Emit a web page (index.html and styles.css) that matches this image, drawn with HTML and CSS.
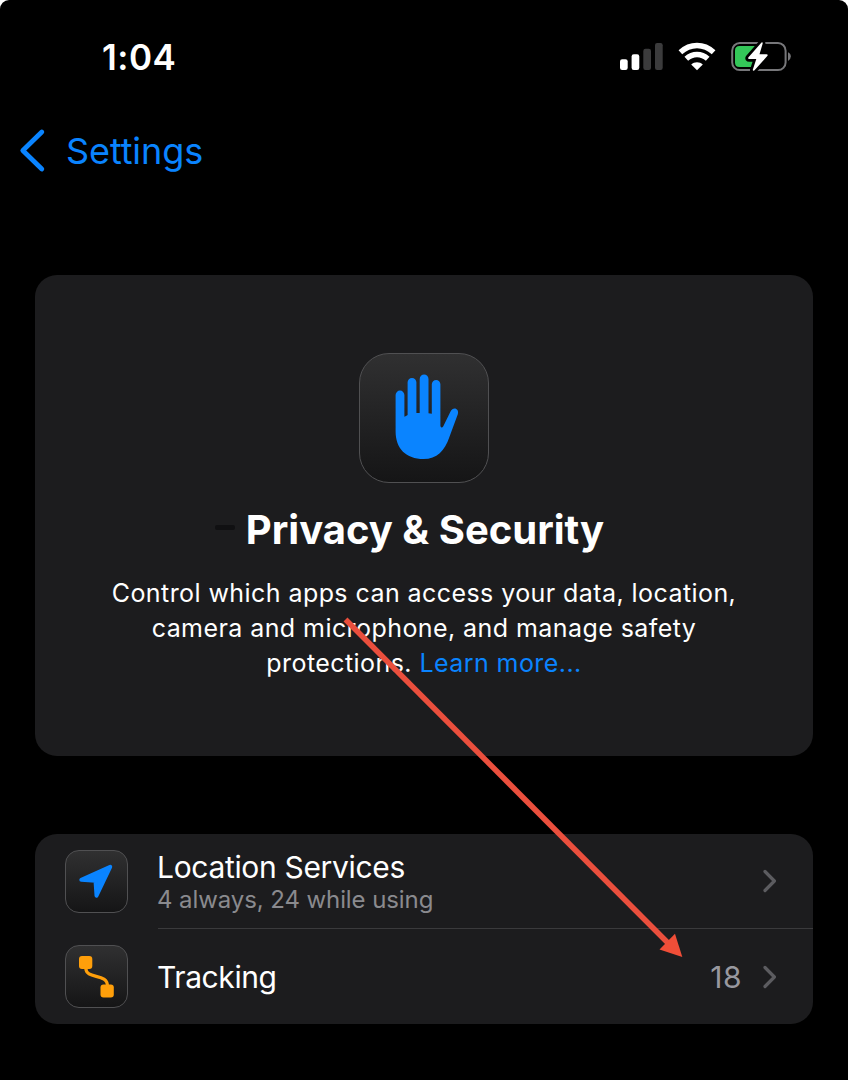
FILE: index.html
```html
<!DOCTYPE html>
<html lang="en">
<head>
<meta charset="utf-8">
<title>Privacy &amp; Security</title>
<link rel="stylesheet" href="styles.css">
</head>
<body>
<main class="screen">
  <header class="status">
    <span class="time">1:04</span>
    <svg class="status-icons" width="174" height="32" viewBox="0 0 174 32">
      <rect x="2" y="19.3" width="7.7" height="10.7" rx="2.2" fill="#fff"/>
      <rect x="13.6" y="14.3" width="7.7" height="15.7" rx="2.2" fill="#fff"/>
      <rect x="25.3" y="8.8" width="7.7" height="21.2" rx="2.2" fill="#3b3b3c"/>
      <rect x="37" y="3" width="7.7" height="27" rx="2.2" fill="#3b3b3c"/>
      <g fill="none" stroke="#fff" stroke-width="5.4">
        <path d="M62.4 12.2C72.2 3.2 85.8 3.2 95.6 12.2"/>
        <path d="M68.3 18.8C74.6 13 83.4 13 89.7 18.8"/>
      </g>
      <path d="M79 30.2L73.2 24.5C76.500 21.500 81.500 21.500 84.800 24.500Z" fill="#fff"/>
      <rect x="114.200" y="3.100" width="53.400" height="27" rx="7.600" fill="none" stroke="#77777a" stroke-width="2"/>
      <path d="M170 12.300Q172.800 13.500 172.800 16.600T170 20.900Z" fill="#77777a"/>
      <path d="M121.500 6H139V27H121.500Q117 27 117 22.500V10.500Q117 6 121.500 6Z" fill="#34c759"/>
      <path d="M143.500 2.500L130.300 17.500Q129.500 19 131.300 19H138.300L134.700 30Q135.300 31.500 136.500 30.200L149.500 15.800Q150.200 14.200 148.500 14.200H141.500L144.700 3.500Q144.700 1.500 143.500 2.500Z" fill="#fff" stroke="#000" stroke-width="5.500" paint-order="stroke" stroke-linejoin="round"/>
    </svg>
  </header>
  <nav class="back">
    <svg width="28" height="46" viewBox="0 0 28 46"><path d="M23.800 4L4.800 22.500L23.800 41" fill="none" stroke="#0a84ff" stroke-width="4.800" stroke-linecap="round" stroke-linejoin="round"/></svg>
    <span class="back-label">Settings</span>
  </nav>
  <section class="card hero">
    <div class="tile tile-large">
      <svg width="130" height="130" viewBox="0 0 130 130" fill="#0a84ff">
        <path d="M36.600 42a4.400 4.400 0 0 1 8.800 0V63.700Q47 63.100 48.600 62.100V29.300a4.400 4.400 0 0 1 8.800 0V59.900H60.700V25.900a4.400 4.400 0 0 1 8.800 0V60.300L72.800 60.700V31.300a4.300 4.300 0 0 1 8.600 0V73Q82.500 76 84.300 73.200L91.400 58.700C94.300 53 100.600 56 98.800 61.300L90.400 84C85.700 98 78 106 64.500 106C47 106 36.600 95.500 36.600 78.500Z"/>
      </svg>
    </div>
    <div class="heading"><i class="dash"></i><h1 class="title">Privacy &amp; Security</h1></div>
    <p class="intro"><span class="line">Control which apps can access your data, location,</span><span class="line">camera and microphone, and manage safety</span><span class="line">protections. <a class="link">Learn more...</a></span></p>
  </section>
  <section class="card list">
    <div class="row">
      <div class="tile tile-small">
        <svg width="63" height="63" viewBox="0 0 63 63"><path d="M45.200 16.800L31.500 45.700L30.500 30.700L16.300 29.800Z" fill="#0a84ff" stroke="#0a84ff" stroke-width="4" stroke-linejoin="round"/></svg>
      </div>
      <div class="row-body divided">
        <div class="labels"><span class="label location">Location Services</span><span class="sub">4 always, 24 while using</span></div>
        <svg class="chevron" width="14" height="24" viewBox="0 0 14 24"><path d="M2 2.500L11.400 12L2 21.500" fill="none" stroke="#5c5c60" stroke-width="3.200" stroke-linecap="round" stroke-linejoin="round"/></svg>
      </div>
    </div>
    <div class="row">
      <div class="tile tile-small">
        <svg width="63" height="63" viewBox="0 0 63 63"><g fill="#ff9f0a"><rect x="14" y="11" width="13.300" height="13" rx="3"/><rect x="35.500" y="39.500" width="13.300" height="13" rx="3"/></g><path d="M20.800 23C20.800 35 42.500 27.500 42.500 41" fill="none" stroke="#ff9f0a" stroke-width="3.200"/></svg>
      </div>
      <div class="row-body">
        <div class="labels"><span class="label tracking">Tracking</span></div>
        <span class="count">18</span>
        <svg class="chevron" width="14" height="24" viewBox="0 0 14 24"><path d="M2 2.500L11.400 12L2 21.500" fill="none" stroke="#5c5c60" stroke-width="3.200" stroke-linecap="round" stroke-linejoin="round"/></svg>
      </div>
    </div>
  </section>
  <svg class="arrow" width="848" height="1080" viewBox="0 0 848 1080"><path d="M345.500 619.500L668 943" stroke="#ea4f3d" stroke-width="5.500"/><path d="M682.300 957L659.500 949.500L675 933.800Z" fill="#f04e38"/></svg>
</main>
</body>
</html>
```
FILE: styles.css
```css
* { box-sizing: border-box; }
body { margin: 0; background: #fff; font-family: Inter, "Liberation Sans", sans-serif; color: #fff; }
svg { display: block; flex: none; }
.screen { position: relative; width: 848px; height: 1080px; background: #000; border-radius: 9px 9px 0 0; padding: 36px 35px 0; overflow: hidden; white-space: nowrap; }
.status { display: flex; justify-content: space-between; height: 92px; padding: 0 21px 0 67px; }
.status-icons { margin-top: 4px; }
.time { font-size: 35px; line-height: 42px; font-weight: 600; letter-spacing: 0.5px; }
.back { display: flex; gap: 20px; height: 147px; margin-left: -17px; color: #0a84ff; }
.back-label { font-size: 36px; line-height: 46px; letter-spacing: -0.1px; }
.card { background: #1c1c1e; border-radius: 22px; }
.hero { height: 481px; padding-top: 78px; display: flex; flex-direction: column; align-items: center; }
.tile { background: linear-gradient(#303031, #151516); border: 1px solid #505052; flex: none; }
.tile svg { margin: -1px; }
.tile-large { width: 130px; height: 130px; border-radius: 30px; }
.tile-small { width: 63px; height: 63px; border-radius: 14px; }
.heading { display: flex; margin-top: 23px; margin-left: -29px; }
.dash { width: 20px; height: 5px; border-radius: 2px; background: #101012; margin: 19px 11px 0 0; }
.title { margin: 0; font-size: 40px; line-height: 48px; font-weight: 700; }
.intro { margin: 22px 0 0; font-size: 25px; line-height: 35px; letter-spacing: 0.43px; text-align: center; }
.line { display: block; }
.link { color: #0a84ff; }
.list { margin-top: 78px; height: 190px; }
.row { display: flex; height: 95px; padding-left: 30px; gap: 30px; align-items: center; }
.row-body { flex: 1; height: 95px; display: flex; align-items: center; padding-right: 36px; }
.divided { border-bottom: 1px solid #3a3a3c; }
.labels { display: flex; flex-direction: column; align-items: flex-start; flex: 1; }
.label { font-size: 30px; line-height: 36px; margin-left: -1px; }
.location { letter-spacing: -0.33px; padding-top: 2px; }
.tracking { letter-spacing: -0.4px; }
.sub { font-size: 24px; line-height: 30px; color: #8a8a8e; letter-spacing: -0.09px; margin-left: -1px; }
.count { font-size: 30px; line-height: 36px; letter-spacing: 0.5px; color: #98989f; margin-right: 21px; }
.arrow { position: absolute; left: 0; top: 0; }
```
